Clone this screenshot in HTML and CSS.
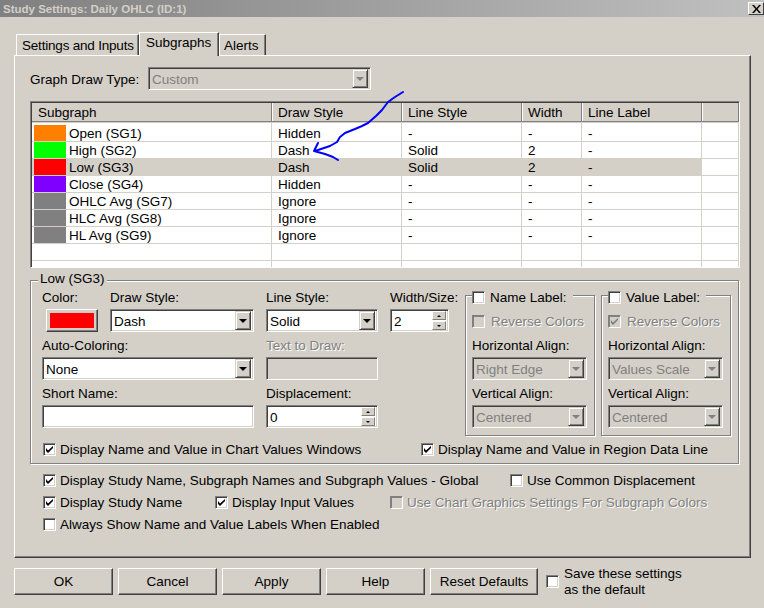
FILE: index.html
```html
<!DOCTYPE html>
<html lang="en">
<head>
<meta charset="utf-8">
<title>Study Settings</title>
<link rel="stylesheet" href="styles.css">
</head>
<body>
<div class="window">
  <div class="titlebar"><span class="title">Study Settings: Daily OHLC (ID:1)</span><span class="close"><svg width="9" height="8" viewBox="0 0 9 8"><path d="M0 0h2l2.500 3 2.500-3h2l-3.500 4 3.500 4h-2l-2.500-3-2.500 3h-2l3.500-4z"/></svg></span></div>
  <div class="tabs">
    <div class="tab tab-first">Settings and Inputs</div>
    <div class="tab tab-active">Subgraphs</div>
    <div class="tab tab-last">Alerts</div>
  </div>
  <div class="panel">
    <div class="draw-type">
      <span class="draw-type-label">Graph Draw Type:</span>
      <div class="select select-type off"><span class="select-text">Custom</span><span class="arrow-btn"><i class="arrow"></i></span></div>
    </div>
    <div class="table-wrap">
      <table class="grid-table">
        <colgroup><col class="c1"><col class="c2"><col class="c3"><col class="c4"><col class="c5"><col class="c6"></colgroup>
        <thead><tr><th>Subgraph</th><th>Draw Style</th><th>Line Style</th><th>Width</th><th>Line Label</th><th></th></tr></thead>
        <tbody>
          <tr><td><div class="name-cell"><span class="swatch sw-orange"></span>Open (SG1)</div></td><td>Hidden</td><td>-</td><td>-</td><td>-</td><td></td></tr>
          <tr><td><div class="name-cell"><span class="swatch sw-green"></span>High (SG2)</div></td><td>Dash</td><td>Solid</td><td>2</td><td>-</td><td></td></tr>
          <tr class="selected"><td><div class="name-cell"><span class="swatch sw-red"></span>Low (SG3)</div></td><td>Dash</td><td>Solid</td><td>2</td><td>-</td><td class="plain"></td></tr>
          <tr><td><div class="name-cell"><span class="swatch sw-purple"></span>Close (SG4)</div></td><td>Hidden</td><td>-</td><td>-</td><td>-</td><td></td></tr>
          <tr><td><div class="name-cell"><span class="swatch sw-gray"></span>OHLC Avg (SG7)</div></td><td>Ignore</td><td>-</td><td>-</td><td>-</td><td></td></tr>
          <tr><td><div class="name-cell"><span class="swatch sw-gray"></span>HLC Avg (SG8)</div></td><td>Ignore</td><td>-</td><td>-</td><td>-</td><td></td></tr>
          <tr><td><div class="name-cell"><span class="swatch sw-gray"></span>HL Avg (SG9)</div></td><td>Ignore</td><td>-</td><td>-</td><td>-</td><td></td></tr>
          <tr><td></td><td></td><td></td><td></td><td></td><td></td></tr>
          <tr><td></td><td></td><td></td><td></td><td></td><td></td></tr>
        </tbody>
      </table>
    </div>
    <div class="group">
      <div class="legend">Low (SG3)</div>
      <div class="group-body">
        <div class="form-grid">
          <span class="lbl col-a">Color:</span>
          <span class="lbl col-b">Draw Style:</span>
          <span class="lbl col-line">Line Style:</span>
          <span class="lbl col-width">Width/Size:</span>
          <div class="color-btn col-a"><span class="color-fill"></span></div>
          <div class="select col-b"><span class="select-text">Dash</span><span class="arrow-btn"><i class="arrow"></i></span></div>
          <div class="select col-line"><span class="select-text">Solid</span><span class="arrow-btn"><i class="arrow"></i></span></div>
          <div class="select col-width"><span class="select-text">2</span><span class="spin"><span class="spin-btn"><i class="tiny up"></i></span><span class="spin-btn"><i class="tiny down"></i></span></span></div>
          <span class="lbl lbl-gap col-wide">Auto-Coloring:</span>
          <span class="lbl lbl-gap lbl-off col-line">Text to Draw:</span>
          <div class="select col-wide"><span class="select-text">None</span><span class="arrow-btn"><i class="arrow"></i></span></div>
          <div class="select field-off col-line"></div>
          <span class="lbl lbl-gap col-wide">Short Name:</span>
          <span class="lbl lbl-gap col-line">Displacement:</span>
          <div class="select col-wide"></div>
          <div class="select col-line"><span class="select-text">0</span><span class="spin"><span class="spin-btn"><i class="tiny up"></i></span><span class="spin-btn"><i class="tiny down"></i></span></span></div>
        </div>
        <div class="label-box box-name">
          <div class="box-legend"><span class="cb"></span><span class="cap">Name Label:</span></div>
          <div class="check reverse"><span class="cb cb-off"></span><span class="cap lbl-off">Reverse Colors</span></div>
          <span class="lbl">Horizontal Align:</span>
          <div class="select off"><span class="select-text">Right Edge</span><span class="arrow-btn"><i class="arrow"></i></span></div>
          <span class="lbl lbl-gap">Vertical Align:</span>
          <div class="select off"><span class="select-text">Centered</span><span class="arrow-btn"><i class="arrow"></i></span></div>
        </div>
        <div class="label-box box-value">
          <div class="box-legend"><span class="cb"></span><span class="cap">Value Label:</span></div>
          <div class="check reverse"><span class="cb cb-off"><svg class="tick" viewBox="0 0 9 9"><path d="M1 3v3l2 2 5-5V1L3 5.500z"/></svg></span><span class="cap lbl-off">Reverse Colors</span></div>
          <span class="lbl">Horizontal Align:</span>
          <div class="select off"><span class="select-text">Values Scale</span><span class="arrow-btn"><i class="arrow"></i></span></div>
          <span class="lbl lbl-gap">Vertical Align:</span>
          <div class="select off"><span class="select-text">Centered</span><span class="arrow-btn"><i class="arrow"></i></span></div>
        </div>
      </div>
      <div class="group-checks">
        <div class="check"><span class="cb"><svg class="tick" viewBox="0 0 9 9"><path d="M1 3v3l2 2 5-5V1L3 5.500z"/></svg></span><span class="cap">Display Name and Value in Chart Values Windows</span></div>
        <div class="check"><span class="cb"><svg class="tick" viewBox="0 0 9 9"><path d="M1 3v3l2 2 5-5V1L3 5.500z"/></svg></span><span class="cap">Display Name and Value in Region Data Line</span></div>
      </div>
    </div>
    <div class="globals">
      <div class="check wide"><span class="cb"><svg class="tick" viewBox="0 0 9 9"><path d="M1 3v3l2 2 5-5V1L3 5.500z"/></svg></span><span class="cap">Display Study Name, Subgraph Names and Subgraph Values - Global</span></div>
      <div class="check"><span class="cb"></span><span class="cap">Use Common Displacement</span></div>
      <div class="check"><span class="cb"><svg class="tick" viewBox="0 0 9 9"><path d="M1 3v3l2 2 5-5V1L3 5.500z"/></svg></span><span class="cap">Display Study Name</span></div>
      <div class="check"><span class="cb"><svg class="tick" viewBox="0 0 9 9"><path d="M1 3v3l2 2 5-5V1L3 5.500z"/></svg></span><span class="cap">Display Input Values</span></div>
      <div class="check span-rest"><span class="cb cb-off"></span><span class="cap lbl-off">Use Chart Graphics Settings For Subgraph Colors</span></div>
      <div class="check wide"><span class="cb"></span><span class="cap">Always Show Name and Value Labels When Enabled</span></div>
    </div>
  </div>
  <div class="actions">
    <div class="btn">OK</div>
    <div class="btn">Cancel</div>
    <div class="btn">Apply</div>
    <div class="btn">Help</div>
    <div class="btn btn-reset">Reset Defaults</div>
    <div class="save"><span class="cb"></span><span>Save these settings<br>as the default</span></div>
  </div>
  <svg class="scribble" viewBox="0 0 764 608" width="764" height="608"><path d="M403 92L395 97L388 102L382 110L376 116L368 123L362 126L355 129L345 133L340 137L337 142L330 146L315 151M318 143L314 151L325 154L333 157L338 160"/></svg>
</div>
</body>
</html>
```
FILE: styles.css
```css
* { box-sizing: border-box; }
html, body { margin: 0; padding: 0; }
body { font: 13.5px/16px "Liberation Sans", Arial, sans-serif; color: #000; background: #d4d0c8; }
.window { position: relative; width: 764px; height: 608px; overflow: hidden; background: #d4d0c8; }

.titlebar { height: 17px; display: flex; align-items: center; justify-content: space-between; padding: 0 0 0 3px; background: linear-gradient(90deg, #808080, #c0c0c0); }
.title { font-weight: bold; font-size: 11.5px; color: #d4d0c8; }
.close { width: 16px; height: 13px; display: flex; align-items: center; justify-content: center; background: #d4d0c8; border: 1px solid; border-color: #fff #404040 #404040 #fff; }
.close svg { display: block; }

.tabs { height: 38px; display: flex; align-items: flex-end; padding-left: 16px; }
.tab { height: 21px; padding-top: 3px; white-space: nowrap; background: #d4d0c8; border-top: 1px solid #fff; border-left: 1px solid #fff; border-right: 1px solid #404040; box-shadow: inset -1px 0 #808080; }
.tab-first { width: 123px; padding-left: 5px; letter-spacing: -0.2px; }
.tab-active { position: relative; z-index: 1; width: 80px; height: 24px; margin-bottom: -1px; padding-left: 6px; padding-top: 2px; }
.tab-last { width: 47px; padding-left: 4px; }

.panel { width: 737px; height: 503px; margin-left: 14px; padding: 11px 0 0 15px; border: 1px solid; border-color: #fff #404040 #404040 #fff; box-shadow: inset -1px -1px #808080; }

.draw-type { display: flex; align-items: center; height: 23px; }
.draw-type-label { width: 118px; padding-top: 2px; }
.select-type { width: 223px; }

.select { display: flex; align-items: center; justify-content: space-between; height: 23px; padding: 0 2px 0 3px; background: #fff; border: 1px solid; border-color: #808080 #fff #fff #808080; box-shadow: inset 1px 1px #404040, inset -1px -1px #d4d0c8; }
.select.off { background: #d4d0c8; color: #808080; }
.field-off { background: #d4d0c8; }
.select-text { white-space: nowrap; padding-top: 2px; }
.arrow-btn { width: 16px; height: 19px; display: flex; align-items: center; justify-content: center; background: #d4d0c8; border: 1px solid; border-color: #d4d0c8 #404040 #404040 #d4d0c8; box-shadow: inset 1px 1px #fff, inset -1px -1px #808080; }
.arrow { width: 0; height: 0; border: 4px solid transparent; border-top-color: #000; border-bottom: 0; }
.off .arrow { border-top-color: #808080; }
.spin { display: flex; flex-direction: column; gap: 1px; }
.spin-btn { width: 14px; height: 9px; display: flex; align-items: center; justify-content: center; background: #d4d0c8; border: 1px solid; border-color: #fff #808080 #808080 #fff; }
.tiny { width: 0; height: 0; border: 2px solid transparent; }
.tiny.up { border-bottom-color: #000; border-top: 0; }
.tiny.down { border-top-color: #000; border-bottom: 0; }

.table-wrap { width: 710px; height: 167px; margin-top: 11px; overflow: hidden; border: 1px solid; border-color: #808080 #fff #fff #808080; box-shadow: inset 1px 1px #404040; padding: 1px 0 0 1px; background: #fff; }
.grid-table { width: 707px; table-layout: fixed; border-collapse: separate; border-spacing: 0; }
.c1 { width: 240px; } .c2 { width: 130px; } .c3 { width: 120px; } .c4 { width: 60px; } .c5 { width: 120px; } .c6 { width: 37px; }
.grid-table th { height: 19px; padding: 1px 0 0 6px; font-weight: normal; text-align: left; background: #d4d0c8; border-right: 1px solid #808080; border-bottom: 1px solid #808080; box-shadow: inset 1px 0 #fff; }
.grid-table th:first-child { box-shadow: none; }
.grid-table td { height: 17px; padding: 1px 0 0 6px; border-right: 1px solid #d4d0c8; border-bottom: 1px solid #d4d0c8; white-space: nowrap; line-height: 15px; }
.grid-table tbody tr:first-child td { height: 19px; padding-top: 3px; border-top: 1px solid #d4d0c8; }
.grid-table td:first-child { padding: 0 0 0 2px; }
.grid-table tbody tr:first-child td:first-child { padding-top: 2px; }
.selected td { background: #d4d0c8; }
.selected td.plain { background: #fff; }
.name-cell { display: flex; align-items: flex-start; gap: 3px; height: 16px; padding-top: 1px; }
.swatch { width: 32px; height: 16px; margin-top: -1px; }
.sw-orange { background: #ff8000; } .sw-green { background: #00ff00; } .sw-red { background: #ff0000; } .sw-purple { background: #8000ff; } .sw-gray { background: #808080; }

.group { width: 709px; height: 184px; margin-top: 12px; border: 1px solid #808080; box-shadow: inset 1px 1px #fff, 1px 1px #fff; }
.legend { width: fit-content; height: 16px; margin: -10px 0 1px 7px; padding: 0 2px; background: #d4d0c8; }
.group-body { display: flex; align-items: flex-start; height: 148px; padding-left: 11px; }
.form-grid { display: grid; width: 407px; flex: none; grid-template-columns: 68px 144px 12px 112px 12px 59px; grid-template-rows: 21px 23px 25px 23px 25px 23px; }
.col-a { grid-column: 1; }
.col-b { grid-column: 2; }
.col-line { grid-column: 4; }
.col-width { grid-column: 6; }
.col-wide { grid-column: 1 / 3; }
.lbl { display: block; height: 21px; padding-top: 2px; white-space: nowrap; }
.lbl-off { color: #808080; text-shadow: 1px 1px #fff; white-space: nowrap; }
.lbl-gap { margin-top: 4px; }
.cap { padding-top: 2px; }
.color-btn { width: 52px; height: 23px; margin-left: 4px; padding: 3px; background: #d4d0c8; border: 1px solid; border-color: #fff #404040 #404040 #fff; box-shadow: inset -1px -1px #808080; }
.color-fill { display: block; height: 15px; background: #ff0000; }

.label-box { width: 130px; height: 141px; flex: none; margin-top: 7px; padding: 0 6px; border: 1px solid #808080; box-shadow: inset 1px 1px #fff, 1px 1px #fff; display: flex; flex-direction: column; }
.box-name { margin-left: 16px; }
.box-value { margin-left: 6px; }
.box-legend { display: flex; align-items: center; gap: 5px; width: fit-content; height: 16px; margin: -7px 0 0 0; padding-right: 6px; background: #d4d0c8; white-space: nowrap; }
.label-box .select { flex: none; width: 115px; }
.label-box .lbl { flex: none; }

.check { display: flex; align-items: center; gap: 4px; white-space: nowrap; height: 18px; }
.check.reverse { height: 20px; gap: 6px; margin-top: 6px; margin-bottom: 5px; flex: none; }
.cb { flex: none; display: flex; align-items: center; justify-content: center; width: 13px; height: 13px; background: #fff; border: 1px solid; border-color: #808080 #fff #fff #808080; box-shadow: inset 1px 1px #404040, inset -1px -1px #d4d0c8; }
.cb-off { background: #d4d0c8; box-shadow: inset 1px 1px #808080; }
.tick { display: block; width: 9px; height: 9px; fill: #000; }
.cb-off .tick { fill: #808080; }

.group-checks { display: grid; grid-template-columns: 378px 1fr; padding-left: 12px; margin-top: 4px; }
.globals { display: grid; grid-template-columns: 172px 175px 120px 1fr; grid-auto-rows: 22px; margin-top: 5px; padding-left: 13px; align-items: center; }
.wide { grid-column: span 3; }
.span-rest { grid-column: span 2; }

.actions { display: flex; align-items: flex-start; gap: 5px; margin-top: 10px; padding-left: 14px; }
.btn { display: flex; align-items: center; justify-content: center; width: 99px; height: 27px; background: #d4d0c8; border: 1px solid; border-color: #fff #404040 #404040 #fff; box-shadow: inset -1px -1px #808080; }
.btn-reset { width: 108px; }
.save { display: flex; align-items: center; gap: 5px; margin-left: 3px; height: 27px; }

.scribble { position: absolute; left: 0; top: 0; pointer-events: none; }
.scribble path { fill: none; stroke: #0000ff; stroke-width: 2; stroke-linejoin: round; stroke-linecap: round; }
```
